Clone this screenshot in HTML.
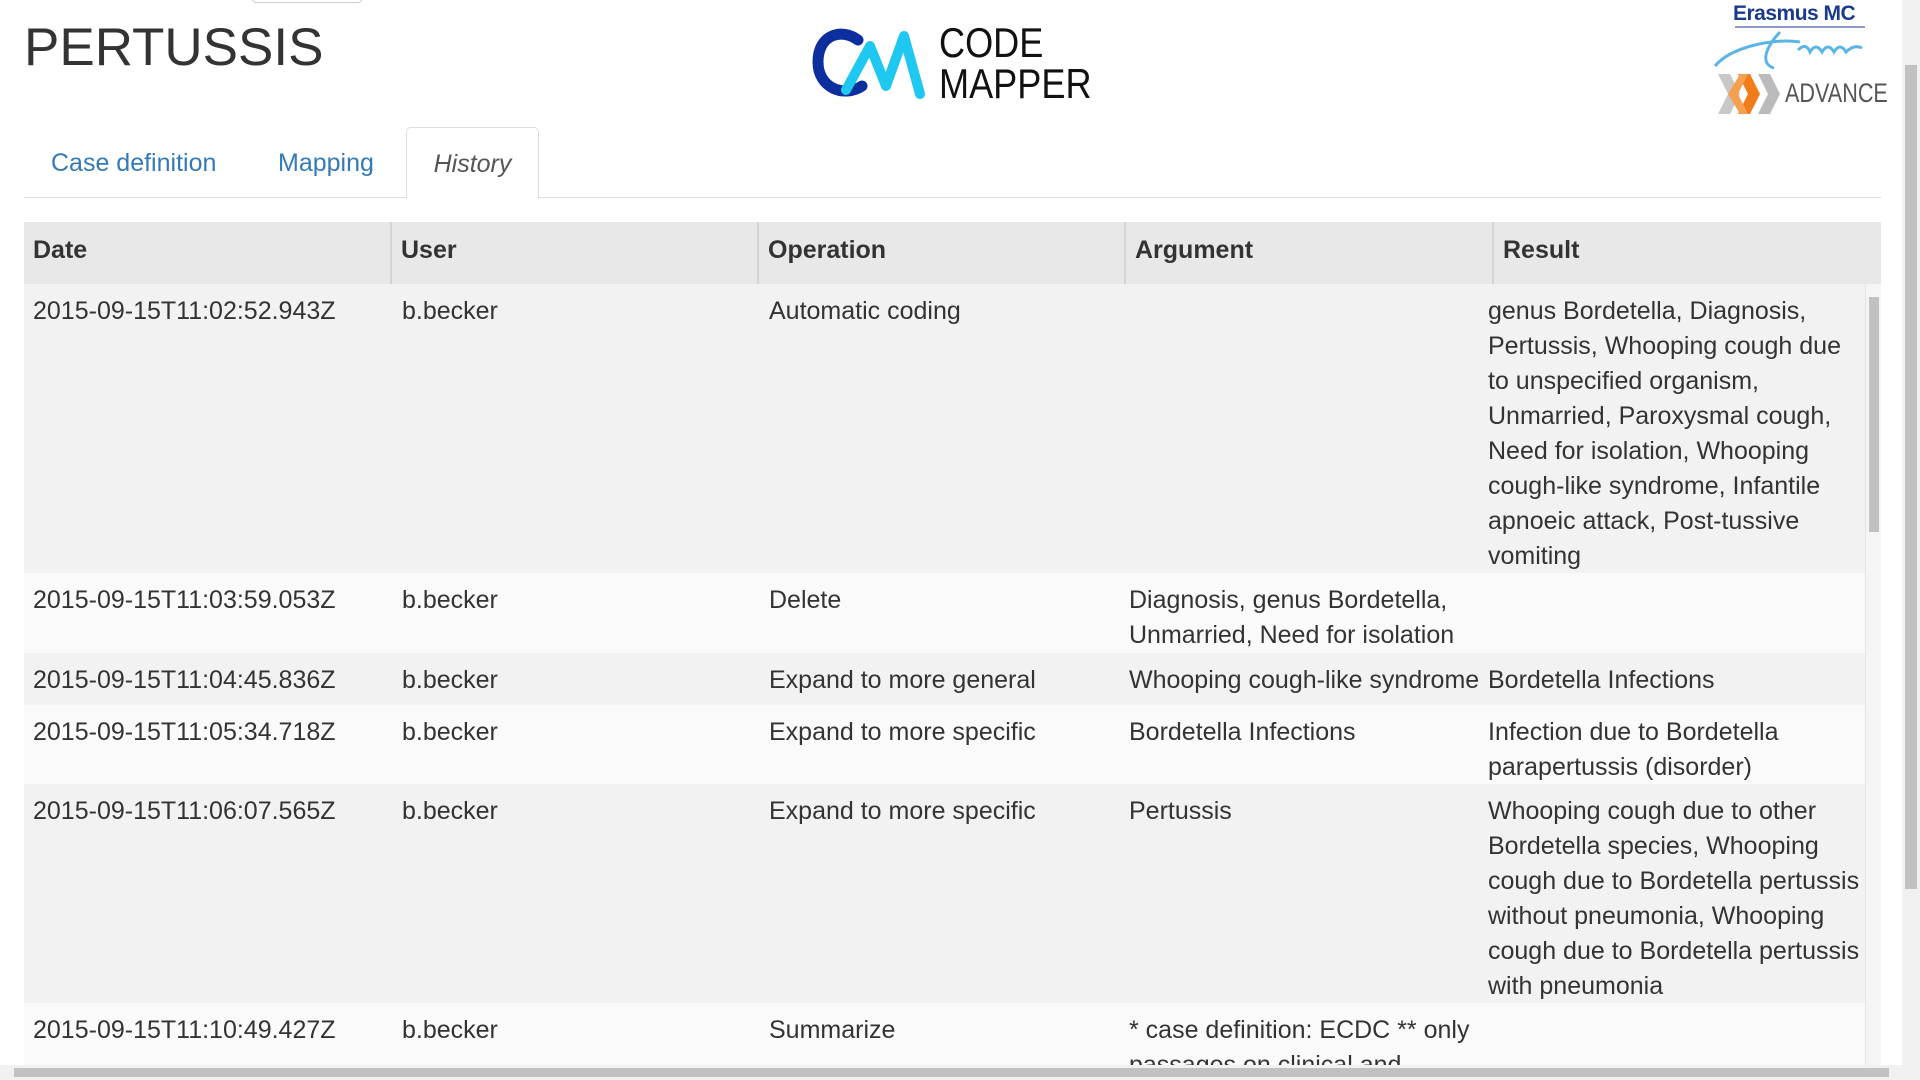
<!DOCTYPE html>
<html><head><meta charset="utf-8"><style>
*{margin:0;padding:0;box-sizing:border-box}
body{width:1920px;height:1080px;overflow:hidden;background:#fff;font-family:"Liberation Sans",Arial,sans-serif;color:#333;position:relative}
.abs{position:absolute}
h1{position:absolute;left:24px;top:17px;font-size:53px;font-weight:400;color:#333;letter-spacing:0}
.tab{position:absolute;top:127px;height:71px;font-size:25px;line-height:72px;color:#337ab7}
.tabline{position:absolute;left:24px;top:197px;width:1857px;height:1px;background:#ddd}
.act{left:406px;width:133px;border:1px solid #ddd;border-bottom:1px solid #fff;border-radius:5px 5px 0 0;background:#fff;color:#555;font-style:italic;text-align:center;height:72px}
.thead{position:absolute;left:24px;top:222px;width:1857px;height:62px;background:#e8e8e8}
.th{position:absolute;top:0;height:62px;line-height:56px;font-weight:bold;font-size:25px;padding-left:9px;border-left:2px solid #d4d4d4}
.tbody{position:absolute;left:24px;top:284px;width:1841px;height:781px;overflow:hidden}
.row{position:absolute;left:0;width:1841px}
.c{position:absolute;top:10px;font-size:25px;line-height:35px;color:#333;white-space:nowrap}
</style></head><body>
<div class="abs" style="left:252px;top:-2px;width:110px;height:5px;border:1px solid #ccc;border-top:none;border-radius:0 0 4px 4px"></div>
<h1>PERTUSSIS</h1>

<svg class="abs" style="left:812px;top:26px" width="120" height="76" viewBox="0 0 120 76">
<path d="M46 14 C30 2 6 8 6 36 C6 62 32 72 50 60" fill="none" stroke="#0d2f9e" stroke-width="11" stroke-linecap="round"/>
<path d="M34 64 L58 20 L74 60 L92 10 L108 68" fill="none" stroke="#1ec8f0" stroke-width="10" stroke-linecap="round" stroke-linejoin="round"/>
</svg>
<div class="abs" style="left:939px;top:22px;font-size:42px;line-height:41px;color:#111;letter-spacing:0;transform:scaleX(0.86);transform-origin:left">CODE<br>MAPPER</div>

<div class="abs" style="left:1733px;top:2px;font-size:21px;font-weight:bold;color:#1a3a8c;letter-spacing:-0.5px">Erasmus MC</div>
<div class="abs" style="left:1735px;top:26px;width:130px;height:2px;background:#8a9cc5"></div>
<svg class="abs" style="left:1710px;top:28px" width="170" height="44" viewBox="0 0 170 44">
<path d="M5 38 C20 20 60 10 90 14 M70 4 C55 20 50 36 64 40 M88 22 q8 -8 12 2 q6 -10 12 0 q6 -10 12 0 q6 -10 12 0 q8 -8 16 -4" fill="none" stroke="#5ab5e6" stroke-width="3"/>
</svg>
<svg class="abs" style="left:1718px;top:74px" width="62" height="40" viewBox="0 0 62 40">
<polygon points="0,0 12,0 22,20 12,40 0,40 10,20" fill="#c8c8c8"/>
<polygon points="20,0 32,0 42,20 32,40 20,40 30,20" fill="#f07d1a"/>
<polygon points="40,0 52,0 62,20 52,40 40,40 50,20" fill="#bbb"/>
<polygon points="10,20 22,0 30,0 20,20 30,40 22,40" fill="#f5a050"/>
</svg>
<div class="abs" style="left:1785px;top:78px;font-size:27px;color:#555;transform:scaleX(0.8);transform-origin:left">ADVANCE</div>

<div class="tab" style="left:51px">Case definition</div>
<div class="tab" style="left:278px">Mapping</div>
<div class="tabline"></div>
<div class="tab act">History</div>

<div class="thead">
<div class="th" style="left:0;border-left:none">Date</div>
<div class="th" style="left:366px">User</div>
<div class="th" style="left:733px">Operation</div>
<div class="th" style="left:1100px">Argument</div>
<div class="th" style="left:1468px;right:0">Result</div>
</div>

<div class="tbody">
<div class="row" style="top:0;height:289px;background:#f2f2f2">
<div class="c" style="left:9px">2015-09-15T11:02:52.943Z</div><div class="c" style="left:378px">b.becker</div><div class="c" style="left:745px">Automatic coding</div>
<div class="c" style="left:1464px">genus Bordetella, Diagnosis,<br>Pertussis, Whooping cough due<br>to unspecified organism,<br>Unmarried, Paroxysmal cough,<br>Need for isolation, Whooping<br>cough-like syndrome, Infantile<br>apnoeic attack, Post-tussive<br>vomiting</div></div>
<div class="row" style="top:289px;height:80px;background:#fafafa">
<div class="c" style="left:9px">2015-09-15T11:03:59.053Z</div><div class="c" style="left:378px">b.becker</div><div class="c" style="left:745px">Delete</div>
<div class="c" style="left:1105px">Diagnosis, genus Bordetella,<br>Unmarried, Need for isolation</div></div>
<div class="row" style="top:369px;height:52px;background:#f2f2f2">
<div class="c" style="left:9px">2015-09-15T11:04:45.836Z</div><div class="c" style="left:378px">b.becker</div><div class="c" style="left:745px">Expand to more general</div>
<div class="c" style="left:1105px">Whooping cough-like syndrome</div><div class="c" style="left:1464px">Bordetella Infections</div></div>
<div class="row" style="top:421px;height:79px;background:#fafafa">
<div class="c" style="left:9px">2015-09-15T11:05:34.718Z</div><div class="c" style="left:378px">b.becker</div><div class="c" style="left:745px">Expand to more specific</div>
<div class="c" style="left:1105px">Bordetella Infections</div><div class="c" style="left:1464px">Infection due to Bordetella<br>parapertussis (disorder)</div></div>
<div class="row" style="top:500px;height:219px;background:#f2f2f2">
<div class="c" style="left:9px">2015-09-15T11:06:07.565Z</div><div class="c" style="left:378px">b.becker</div><div class="c" style="left:745px">Expand to more specific</div>
<div class="c" style="left:1105px">Pertussis</div><div class="c" style="left:1464px">Whooping cough due to other<br>Bordetella species, Whooping<br>cough due to Bordetella pertussis<br>without pneumonia, Whooping<br>cough due to Bordetella pertussis<br>with pneumonia</div></div>
<div class="row" style="top:719px;height:120px;background:#fafafa">
<div class="c" style="left:9px">2015-09-15T11:10:49.427Z</div><div class="c" style="left:378px">b.becker</div><div class="c" style="left:745px">Summarize</div>
<div class="c" style="left:1105px">* case definition: ECDC ** only<br>passages on clinical and</div></div>
</div>
<div class="abs" style="left:1865px;top:284px;width:16px;height:781px;background:#f5f5f5;border-left:1px solid #e4e4e4"></div>
<div class="abs" style="left:1869px;top:297px;width:10px;height:235px;background:#c1c1c1"></div>
<div class="abs" style="left:1902px;top:0;width:18px;height:1065px;background:#f1f1f1"></div>
<div class="abs" style="left:1905px;top:65px;width:12px;height:824px;background:#c1c1c1"></div>
<div class="abs" style="left:0;top:1065px;width:1920px;height:15px;background:#f1f1f1"></div>
<div class="abs" style="left:14px;top:1068px;width:1875px;height:9px;background:#c1c1c1"></div>
</body></html>
